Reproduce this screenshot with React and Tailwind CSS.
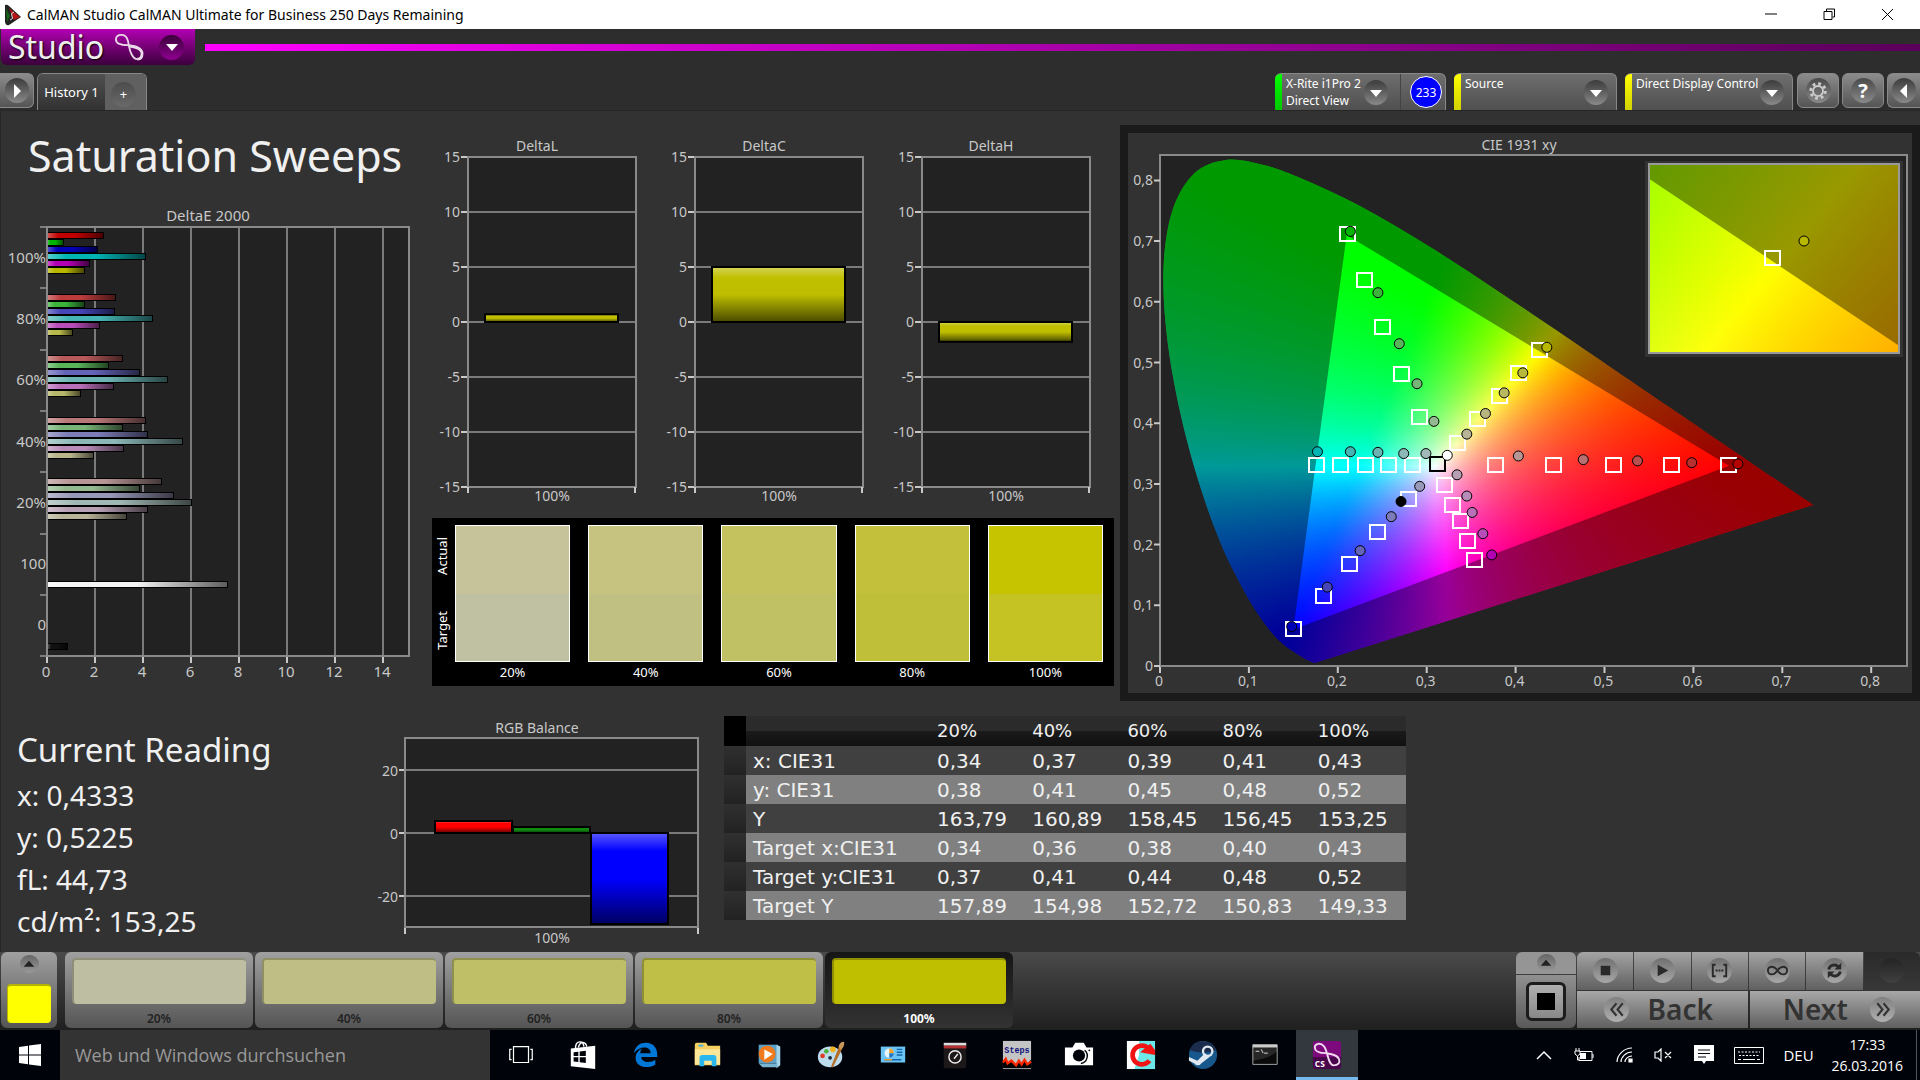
import React, { useState } from "react";

const SWEEP_COLORS = {
  "100%": ["#c00000", "#00b400", "#0000b8", "#00b4b4", "#b400b4", "#b8b800"],
  "80%": ["#bc3c3c", "#3cb43c", "#4646b8", "#46b4b4", "#b84cb8", "#b8b84c"],
  "60%": ["#b85a5a", "#5ab45a", "#6464b8", "#6cb4b4", "#b870b8", "#b8b86c"],
  "40%": ["#b87878", "#78b478", "#7c7cb8", "#8cb8b8", "#b88cb8", "#b8b48c"],
  "20%": ["#b89696", "#94b890", "#9898b8", "#a0b8b4", "#b8a0b4", "#b8b498"],
};

const DELTA_E = [
  { label: "100%", values: [2.35, 0.7, 2.1, 4.1, 1.75, 1.55] },
  { label: "80%", values: [2.85, 1.55, 2.8, 4.4, 2.2, 1.05] },
  { label: "60%", values: [3.15, 2.55, 3.85, 5.0, 2.75, 1.4] },
  { label: "40%", values: [4.1, 3.15, 4.2, 5.65, 3.2, 1.95] },
  { label: "20%", values: [4.75, 3.85, 5.25, 6.0, 4.2, 3.3] },
];

const LEVELS = [
  { label: "20%", actual: "#c6c39b", target: "#c0c1a2", button: "#bebea2" },
  { label: "40%", actual: "#c5c37f", target: "#c0c083", button: "#bfbf85" },
  { label: "60%", actual: "#c4c25f", target: "#c0c065", button: "#bfbf68" },
  { label: "80%", actual: "#c3c13c", target: "#bfbf3a", button: "#bfbf48" },
  { label: "100%", actual: "#c6c400", target: "#c5c324", button: "#bfbf00" },
];

const TABLE_ROWS = [
  ["x: CIE31", "0,34", "0,37", "0,39", "0,41", "0,43"],
  ["y: CIE31", "0,38", "0,41", "0,45", "0,48", "0,52"],
  ["Y", "163,79", "160,89", "158,45", "156,45", "153,25"],
  ["Target x:CIE31", "0,34", "0,36", "0,38", "0,40", "0,43"],
  ["Target y:CIE31", "0,37", "0,41", "0,44", "0,48", "0,52"],
  ["Target Y", "157,89", "154,98", "152,72", "150,83", "149,33"],
];

// Spectral locus, CIE 1931 xy
const LOCUS = [
  [0.1741, 0.005], [0.1644, 0.0109], [0.1566, 0.0177], [0.144, 0.0297], [0.1355, 0.0399],
  [0.1241, 0.0578], [0.1096, 0.0868], [0.0913, 0.1327], [0.0687, 0.2007], [0.0454, 0.295],
  [0.0235, 0.4127], [0.0082, 0.5384], [0.0039, 0.6548], [0.0139, 0.7502], [0.0389, 0.812],
  [0.0743, 0.8338], [0.1142, 0.8262], [0.1547, 0.8059], [0.2296, 0.7543], [0.3016, 0.6923],
  [0.3731, 0.6245], [0.4441, 0.5547], [0.5125, 0.4866], [0.5752, 0.4242], [0.627, 0.3725],
  [0.6915, 0.3083], [0.7347, 0.2653],
];

const GAMUT = [[0.64, 0.33], [0.21, 0.71], [0.15, 0.06]];

const TARGETS = [
  [0.21, 0.712], [0.229, 0.636], [0.25, 0.559], [0.271, 0.481], [0.291, 0.41],
  [0.426, 0.52], [0.403, 0.483], [0.381, 0.444], [0.357, 0.407], [0.334, 0.368],
  [0.175, 0.331], [0.203, 0.331], [0.231, 0.331], [0.256, 0.331], [0.284, 0.331],
  [0.377, 0.331], [0.442, 0.331], [0.509, 0.331], [0.575, 0.331], [0.639, 0.331],
  [0.15, 0.061], [0.183, 0.116], [0.213, 0.168], [0.244, 0.22], [0.279, 0.275],
  [0.353, 0.174], [0.345, 0.206], [0.337, 0.239], [0.329, 0.266], [0.32, 0.298],
];

const READINGS = [
  [0.213, 0.716, "#00b400"], [0.244, 0.615, "#3cb43c"], [0.268, 0.531, "#5ab45a"], [0.288, 0.465, "#78b478"], [0.307, 0.403, "#94b890"],
  [0.434, 0.525, "#b8b800"], [0.407, 0.483, "#b8b83c"], [0.386, 0.45, "#b8b860"], [0.365, 0.416, "#b8b480"], [0.344, 0.382, "#b8b498"],
  [0.322, 0.347, "#ffffff"],
  [0.176, 0.353, "#00b4b4"], [0.213, 0.353, "#46b4b4"], [0.244, 0.352, "#6cb4b4"], [0.273, 0.35, "#8cb8b8"], [0.298, 0.35, "#a0b8b8"],
  [0.402, 0.346, "#b89696"], [0.475, 0.34, "#b87070"], [0.536, 0.338, "#b85050"], [0.597, 0.335, "#b83030"], [0.649, 0.333, "#b40000"],
  [0.333, 0.315, "#b8a0b4"], [0.344, 0.28, "#b88cb8"], [0.35, 0.253, "#b870b8"], [0.362, 0.218, "#b84cb8"], [0.372, 0.183, "#b400b4"],
  [0.291, 0.296, "#9898b8"], [0.27, 0.271, "#000000"], [0.259, 0.246, "#7c7cb8"], [0.224, 0.19, "#6464b8"], [0.187, 0.13, "#4646b8"], [0.147, 0.065, "#0000b8"],
];

function xyToColor(x, y) {
  const Y = Math.max(y, 0.001);
  const X = x / Y;
  const Z = (1 - x - Y) / Y;
  const rgb = [
    3.2406 * X - 1.5372 - 0.4986 * Z,
    -0.9689 * X + 1.8758 + 0.0415 * Z,
    0.0557 * X - 0.204 + 1.057 * Z,
  ].map((c) => Math.max(c, 0));
  const max = Math.max(...rgb);
  return `rgb(${rgb.map((c) => Math.round((255 * c) / max)).join(",")})`;
}

// Thin horizontal strips, each with its own gradient of chromaticity colors
function ColorField({ id, left, top, width, height, toXy, step }) {
  const rows = [];
  for (let y = top; y < top + height; y += 2) rows.push(y);
  const cols = [];
  for (let x = 0; x <= width; x += step) cols.push(x);
  return (
    <g shapeRendering="crispEdges">
      {rows.map((y, i) => (
        <g key={y}>
          <linearGradient id={`${id}-${i}`} gradientUnits="userSpaceOnUse" x1={left} x2={left + width} y1="0" y2="0">
            {cols.map((c) => {
              const [cx, cy] = toXy(left + c, y + 1);
              return <stop key={c} offset={c / width} stopColor={xyToColor(cx, cy)} />;
            })}
          </linearGradient>
          <rect x={left} y={y} width={width} height="2" fill={`url(#${id}-${i})`} />
        </g>
      ))}
    </g>
  );
}

function Sheen({ id, vertical }) {
  return (
    <linearGradient id={id} x1="0" y1="0" x2={vertical ? 0 : 1} y2={vertical ? 1 : 0}>
      <stop offset="0" stopColor="#fff" stopOpacity="0.35" />
      <stop offset="0.2" stopColor="#fff" stopOpacity="0" />
      <stop offset="0.5" stopColor="#000" stopOpacity="0" />
      <stop offset="1" stopColor="#000" stopOpacity="0.62" />
    </linearGradient>
  );
}

function Bar({ x, y, width, height, color, sheen, outline = 2 }) {
  return (
    <>
      <rect x={x} y={y} width={width} height={height} fill={color} />
      <rect x={x} y={y} width={width} height={height} fill={`url(#${sheen})`} stroke="#000" strokeWidth={outline} />
    </>
  );
}

const chartText = "block w-full h-auto font-['Noto_Sans',sans-serif] text-[14px]";

function DeltaEChart() {
  const px = (v) => 47 + v * 24;
  return (
    <svg viewBox="1 0 425 490" className="block w-full h-auto font-['Noto_Sans',sans-serif] text-[15px]" fill="#c8c8c8">
      <Sheen id="sheen-e" />
      <text x="208" y="21" textAnchor="middle">DeltaE 2000</text>
      <rect x="47" y="27" width="362" height="429" fill="#222" />
      {[2, 4, 6, 8, 10, 12, 14].map((v) => (
        <path key={v} d={`M${px(v)} 27V456`} stroke="#7a7a7a" strokeWidth="2" />
      ))}
      {[0, 2, 4, 6, 8, 10, 12, 14].map((v) => (
        <g key={v}>
          <path d={`M${px(v)} 457v6`} stroke="#c8c8c8" strokeWidth="2" />
          <text x={px(v) - 1} y="477" textAnchor="middle">{v}</text>
        </g>
      ))}
      {[0, 1, 2, 3, 4, 5, 6, 7].map((i) => (
        <path key={i} d={`M40 ${27 + Math.round(i * 61.3)}h6`} stroke="#c8c8c8" />
      ))}
      {["100%", "80%", "60%", "40%", "20%", "100", "0"].map((t, i) => (
        <text key={i} x="46" y={63 + Math.round(i * 61.2)} textAnchor="end">{t}</text>
      ))}
      <g shapeRendering="crispEdges">
        {DELTA_E.map((group, g) =>
          group.values.map((v, i) => (
            <Bar
              key={`${g}-${i}`}
              x={47}
              y={32 + Math.round(g * 61.5) + i * 7}
              width={v * 24}
              height={6}
              color={SWEEP_COLORS[group.label][i]}
              sheen="sheen-e"
              outline={1}
            />
          ))
        )}
        <Bar x={47} y={381} width={180} height={6} color="#f4f4f4" sheen="sheen-e" outline={1} />
        <Bar x={47} y={443} width={20} height={6} color="#111" sheen="sheen-e" outline={1} />
      </g>
      <rect x="47" y="27" width="362" height="429" fill="none" stroke="#8a8a8a" strokeWidth="2" />
    </svg>
  );
}

function DeltaChart({ title, value }) {
  const py = (v) => 192 - v * 11;
  const id = `sheen-${title}`;
  return (
    <svg viewBox="0 0 227 380" className={chartText} fill="#c8c8c8">
      <Sheen id={id} vertical />
      <text x="111" y="21" textAnchor="middle">{title}</text>
      <rect x="42" y="27" width="168" height="330" fill="#222" />
      {[15, 10, 5, 0, -5, -10, -15].map((v) => (
        <g key={v}>
          <path d={`M42 ${py(v)}h168`} stroke="#7a7a7a" strokeWidth="2" />
          <path d={`M35 ${py(v)}h6`} stroke="#c8c8c8" strokeWidth="2" />
          <text x="34" y={py(v) + 5} textAnchor="end">{v}</text>
        </g>
      ))}
      <Bar x={59} y={py(Math.max(value, 0))} width={133} height={Math.abs(value) * 11} color="#bfbf00" sheen={id} />
      <rect x="42" y="27" width="168" height="330" fill="none" stroke="#8a8a8a" strokeWidth="2" />
      <path d="M42 357v6M209 357v6" stroke="#c8c8c8" strokeWidth="2" />
      <text x="126" y="371" textAnchor="middle">100%</text>
    </svg>
  );
}

function RgbBalance() {
  return (
    <svg viewBox="360 715 360 237" className={chartText} fill="#c8c8c8">
      <Sheen id="sheen-rgb" vertical />
      <text x="537" y="733" textAnchor="middle">RGB Balance</text>
      <rect x="405" y="738" width="293" height="189" fill="#222" />
      {[[20, 770], [0, 833], [-20, 896]].map(([v, y]) => (
        <g key={v}>
          <path d={`M405 ${y}h293`} stroke="#7a7a7a" strokeWidth="2" />
          <path d={`M399 ${y}h6`} stroke="#c8c8c8" strokeWidth="2" />
          <text x="398" y={y + 6} textAnchor="end">{v}</text>
        </g>
      ))}
      <rect x="405" y="738" width="293" height="189" fill="none" stroke="#8a8a8a" strokeWidth="2" />
      <Bar x={435} y={821} width={77} height={12} color="#ff0000" sheen="sheen-rgb" />
      <Bar x={513} y={827} width={77} height={6} color="#108a10" sheen="sheen-rgb" />
      <Bar x={591} y={833} width={77} height={91} color="#0000ff" sheen="sheen-rgb" />
      <path d="M405 928v6M698 928v6" stroke="#c8c8c8" strokeWidth="2" />
      <text x="552" y="943" textAnchor="middle">100%</text>
    </svg>
  );
}

function CieChart() {
  const px = (x) => 40 + x * 889;
  const py = (y) => 541 - y * 607;
  const pts = LOCUS.map(([x, y]) => [px(x), py(y)]);
  let locus = `M${pts[0]}`;
  for (let i = 0; i < pts.length - 1; i++) {
    const a = pts[i - 1] || pts[i];
    const b = pts[i];
    const c = pts[i + 1];
    const d = pts[i + 2] || c;
    locus += `C${b[0] + (c[0] - a[0]) / 6} ${b[1] + (c[1] - a[1]) / 6} ${c[0] - (d[0] - b[0]) / 6} ${c[1] - (d[1] - b[1]) / 6} ${c[0]} ${c[1]}`;
  }
  locus += "Z";
  const toPath = (fx, fy) => "M" + GAMUT.map(([x, y]) => `${fx(x)} ${fy(y)}`).join("L") + "Z";
  const ix = (x) => 652 + (x - 0.426) * 4300;
  const iy = (y) => 133 - (y - 0.52) * 3250;
  const ticks = [0, 1, 2, 3, 4, 5, 6, 7, 8];
  return (
    <svg viewBox="8 8 784 560" className={chartText} fill="#c8c8c8">
      <clipPath id="locus"><path d={locus} /></clipPath>
      <clipPath id="inset"><rect x="529" y="39" width="250" height="189" /></clipPath>
      <text x="399" y="25" textAnchor="middle">CIE 1931 xy</text>
      <rect x="40" y="30" width="747" height="511" fill="#222" />
      <g clipPath="url(#locus)">
        <ColorField id="cie" left={40} top={30} width={660} height={510} step={11} toXy={(x, y) => [(x - 40) / 889, (541 - y) / 607]} />
        <path d={"M0 0H800V580H0Z" + toPath(px, py)} fillRule="evenodd" fill="#000" fillOpacity="0.4" />
      </g>
      <rect x="40" y="30" width="747" height="511" fill="none" stroke="#8a8a8a" strokeWidth="2" />
      {ticks.map((t) => (
        <g key={t}>
          <path d={`M${px(t / 10)} 542v6M34 ${py(t / 10)}h6`} stroke="#c8c8c8" strokeWidth="2" />
          <text x={px(t / 10) - 1} y="561" textAnchor="middle">{t ? `0,${t}` : "0"}</text>
          <text x="33" y={py(t / 10) + 5} textAnchor="end">{t ? `0,${t}` : "0"}</text>
        </g>
      ))}
      {TARGETS.map(([x, y], i) => (
        <rect key={i} x={Math.round(px(x)) - 7} y={Math.round(py(y)) - 7} width="15" height="14" fill="none" stroke="#fff" strokeWidth="2" />
      ))}
      <rect x="310" y="332" width="15" height="14" fill="none" stroke="#000" strokeWidth="2" />
      {READINGS.map(([x, y, c], i) => (
        <circle key={i} cx={px(x) + 1} cy={py(y)} r="5" fill={c} stroke="#000" strokeWidth="1" />
      ))}
      <rect x="525" y="36" width="258" height="196" fill="#333" />
      <g clipPath="url(#inset)">
        <ColorField id="zoom" left={529} top={38} width={250} height={192} step={10} toXy={(x, y) => [0.426 + (x - 652) / 4300, 0.52 + (133 - y) / 3250]} />
        <path d={"M-3000-3000H6000V6000H-3000Z" + toPath(ix, iy)} fillRule="evenodd" fill="#000" fillOpacity="0.4" />
      </g>
      <rect x="529" y="39" width="250" height="189" fill="none" stroke="#999" strokeWidth="2" />
      <rect x="645" y="126" width="15" height="14" fill="none" stroke="#fff" strokeWidth="2" />
      <circle cx="684" cy="116" r="5" fill="#b8b800" stroke="#000" />
    </svg>
  );
}

function Swatches() {
  return (
    <div className="mt-2 ml-1.5 mr-1.5 flex bg-black text-[13px] leading-4 text-white h-[168px] pt-[7px] pr-[11px]">
      <div className="flex w-[23px] flex-col items-center justify-between pt-3 pr-1 pb-9">
        <span className="rotate-180 [writing-mode:vertical-rl]">Actual</span>
        <span className="rotate-180 [writing-mode:vertical-rl]">Target</span>
      </div>
      <div className="grid flex-1 grid-cols-5 gap-[18px]">
        {LEVELS.map((l) => (
          <div key={l.label} className="text-center">
            <div className="flex h-[137px] flex-col border border-white">
              <div className="flex-1" style={{ background: l.actual }} />
              <div className="flex-1" style={{ background: l.target }} />
            </div>
            <div className="mt-0.5">{l.label}</div>
          </div>
        ))}
      </div>
    </div>
  );
}

function ReadingsTable() {
  return (
    <table className="w-[682px] table-fixed border-collapse text-left font-['DejaVu_Sans',sans-serif] text-[20px] text-[#f0f0f0]">
      <colgroup>
        <col className="w-[22px]" />
        <col className="w-[184px]" />
      </colgroup>
      <thead>
        <tr className="h-[30px] bg-[linear-gradient(#2b2b2b_0_50%,#1a1a1a_50%,#111)] text-[18px]">
          <th className="bg-black" />
          <th />
          {LEVELS.map((l) => (
            <th key={l.label} className="p-0 pl-[7px] font-normal leading-7">{l.label}</th>
          ))}
        </tr>
      </thead>
      <tbody>
        {TABLE_ROWS.map((row, i) => (
          <tr key={row[0]} className={`h-[29px] ${i % 2 ? "bg-[#808080]" : "bg-[#404040]"}`}>
            <td className="bg-linear-to-b from-[#303030] to-[#222] p-0" />
            {row.map((cell, j) => (
              <td key={j} className="whitespace-nowrap p-0 pl-[7px] leading-7">{cell}</td>
            ))}
          </tr>
        ))}
      </tbody>
    </table>
  );
}

function RoundArrow({ dir = "down" }) {
  const d = { down: "M6 10h12l-6 7z", right: "M9 5v14l7-7z", left: "M15 5v14l-7-7z", up: "M5 15h14l-7-7z" }[dir];
  return (
    <span className="flex h-[25px] w-[24px] shrink-0 items-center justify-center rounded-full bg-linear-to-b from-[#3c3c3c] to-[#8a8a8a]">
      <svg viewBox="0 0 24 24" className="h-6 w-6" fill="#fff"><path d={d} /></svg>
    </span>
  );
}

const deviceTab =
  "flex h-[37px] overflow-hidden rounded-t-md border-t border-r border-[#888] bg-linear-to-b from-[#6e6e6e] to-[#505050] text-left text-[12px] leading-[17px] text-white";
const squareBtn =
  "flex h-[35px] w-[42px] items-center justify-center rounded-md border border-[#8a8a8a] bg-linear-to-b from-[#8c8c8c] to-[#555]";

function Header() {
  return (
    <header className="bg-[#2d2d2d]">
      <div className="flex items-start gap-[10px]">
        <button className="ml-px flex h-9 w-[194px] items-center rounded-b-md bg-linear-to-b from-[#b400b4] to-[#3c003c] pl-[7px] text-white">
          <span className="text-[32px] leading-8 text-[#eee] [text-shadow:1px_1px_2px_#000]">Studio</span>
          <svg viewBox="0 0 32 30" className="ml-[9px] h-[28px] w-[32px] shrink-0" fill="none" stroke="#e8d8e8" strokeWidth="2">
            <path d="M15 13C9 13 2 12 2 7 2 3 5 2 8 2c6 0 7 6 8 12s4 14 9 14c4 0 5-3 5-6 0-7-8-8-15-9z" />
            <path d="M17 14c7 1 13 3 13 8 0 4-2 6-5 6" strokeWidth="3" />
          </svg>
          <span className="ml-[14px] flex h-[25px] w-[25px] shrink-0 items-center justify-center rounded-full bg-linear-to-b from-[#3a003a] to-[#900090]">
            <svg viewBox="0 0 24 24" className="h-6 w-6" fill="#fff"><path d="M6 9h12l-6 7z" /></svg>
          </span>
        </button>
        <div className="mt-[15px] h-[7px] flex-1 bg-linear-to-r from-[#ff00ff] to-[#5a005a]" />
      </div>
      <div className="mt-2 flex h-[37px] items-start">
        <button aria-label="Expand" className="flex h-[35px] w-[34px] items-center justify-center rounded-r-md border border-l-0 border-[#8a8a8a] bg-linear-to-b from-[#8c8c8c] to-[#555]">
          <RoundArrow dir="right" />
        </button>
        <div className="ml-[3px] flex h-[37px] overflow-hidden rounded-t-md border border-b-0 border-[#888] text-[13px] text-white">
          <button className="w-[67px] whitespace-nowrap bg-linear-to-b from-[#505050] to-[#323232] pt-0.5 text-center">History 1</button>
          <button aria-label="Add tab" className="flex w-[41px] items-center justify-center bg-[#606060] pt-1 pr-1">
            <span className="flex h-[25px] w-[25px] items-center justify-center rounded-full bg-linear-to-b from-[#4c4c4c] to-[#6a6a6a] leading-5">+</span>
          </button>
        </div>
        <div className="ml-auto flex items-start">
          <div className={`${deviceTab} w-[171px]`}>
            <span className="w-[7px] shrink-0 bg-linear-to-b from-[#00ff00] to-[#00c800]" />
            <button className="flex flex-1 items-center justify-between border-r border-[#444] pl-1 pr-3 text-left">
              <span className="whitespace-nowrap">X-Rite i1Pro 2<br />Direct View</span>
              <RoundArrow />
            </button>
            <span className="mr-[3px] ml-[9px] flex h-8 w-8 items-center justify-center self-center rounded-full border border-white bg-[#0000ff]">233</span>
          </div>
          <button className={`${deviceTab} ml-2 w-[163px]`}>
            <span className="h-full w-[7px] shrink-0 bg-linear-to-b from-[#ffff00] to-[#d2d200]" />
            <span className="flex-1 pl-1 pt-px">Source</span>
            <span className="mr-2 self-center"><RoundArrow /></span>
          </button>
          <button className={`${deviceTab} ml-2 w-[168px]`}>
            <span className="h-full w-[7px] shrink-0 bg-linear-to-b from-[#ffff00] to-[#d2d200]" />
            <span className="flex-1 whitespace-nowrap pl-1 pt-px">Direct Display Control</span>
            <span className="mr-2 self-center"><RoundArrow /></span>
          </button>
          <button aria-label="Settings" className={`${squareBtn} ml-1`}>
            <span className="flex h-[25px] w-[25px] items-center justify-center rounded-full bg-linear-to-b from-[#4a4a4a] to-[#8a8a8a]">
              <svg viewBox="0 0 24 24" className="h-[22px] w-[22px]" fill="none" stroke="#ccc">
                <circle cx="12" cy="12" r="5.500" strokeWidth="2" />
                <circle cx="12" cy="12" r="8" strokeWidth="3" strokeDasharray="3.140 3.140" />
              </svg>
            </span>
          </button>
          <button aria-label="Help" className={`${squareBtn} ml-[3px]`}>
            <span className="flex h-[25px] w-[25px] items-center justify-center rounded-full bg-linear-to-b from-[#4a4a4a] to-[#8a8a8a] text-[20px] font-bold leading-6 text-white">?</span>
          </button>
          <button aria-label="Collapse" className="ml-[3px] flex h-[35px] w-[33px] items-center justify-center rounded-l-md border border-r-0 border-[#8a8a8a] bg-linear-to-b from-[#8c8c8c] to-[#555]">
            <RoundArrow dir="left" />
          </button>
        </div>
      </div>
    </header>
  );
}

function TitleBar() {
  return (
    <div className="flex h-[29px] items-center bg-white text-black">
      <svg viewBox="0 0 18 22" className="ml-1 h-[22px] w-[18px]">
        <path d="M1 1Q3 0 5 2L17 13 5 21Q2 22 1 18Z" fill="#222" />
        <path d="M5 4l11 9-6 3z" fill="#b41414" />
        <path d="M2 4l4 8-3 6z" fill="#146414" />
        <path d="M10 8q-4 1-2 4t-2 4" stroke="#ddd" fill="none" />
      </svg>
      <span className="ml-[5px] text-[14px] leading-5">CalMAN Studio CalMAN Ultimate for Business 250 Days Remaining</span>
      <div className="ml-auto flex">
        {[["Minimize", "M0 6h12"], ["Restore", "M1 3.500h8v8H1zM3.500 3V1h8v8H9.500"], ["Close", "M1 1l11 11M12 1L1 12"]].map(([name, d]) => (
          <button key={name} aria-label={name} className="flex h-[29px] w-[58px] items-center justify-center pr-2">
            <svg viewBox="0 0 13 13" className="h-[13px] w-[13px]" fill="none" stroke="#000"><path d={d} /></svg>
          </button>
        ))}
      </div>
    </div>
  );
}

const transport = [
  ["Stop", <path d="M7 7h10v10H7z" fill="#2a2a2a" />],
  ["Play", <path d="M7 6l11 6-11 6z" fill="#2a2a2a" />],
  ["Range", <g stroke="#2a2a2a" fill="none"><path d="M8 6H5v12h3M16 6h3v12h-3" strokeWidth="2" /><path d="M8 12h8" strokeWidth="2" strokeDasharray="2 1" /></g>],
  ["Loop", <path d="M12 12c-2-3-4-4-6-4a4 4 0 0 0 0 8c2 0 4-1 6-4s4-4 6-4a4 4 0 0 1 0 8c-2 0-4-1-6-4z" fill="none" stroke="#2a2a2a" strokeWidth="2" />],
  ["Refresh", <g fill="none" stroke="#2a2a2a" strokeWidth="3"><path d="M6 11c1-5 7-6 10-3M18 13c-1 5-7 6-10 3" /><path d="M19 4v7h-7zM5 20v-7h7z" fill="#2a2a2a" stroke="none" /></g>],
];

function BottomBar() {
  const [active, setActive] = useState("100%");
  return (
    <footer className="flex h-[78px] items-start bg-linear-to-b from-[#4a4a4a] to-[#202020]">
      <button aria-label="Current patch" className="ml-px flex h-[76px] w-[56px] flex-col items-center rounded-md bg-linear-to-b from-[#a0a0a0] to-[#555] pt-[3px]">
        <span className="flex h-[18px] w-[19px] items-center justify-center rounded-full bg-linear-to-b from-[#666] to-[#999]">
          <svg viewBox="0 0 24 24" className="h-4 w-4" fill="#222"><path d="M4 16h16l-8-9z" /></svg>
        </span>
        <span className="mt-[11px] h-[39px] w-[44px] rounded border-t-2 border-l border-[#b4b400] bg-[#ffff00]" />
      </button>
      <div className="ml-2 flex gap-[2px]">
        {LEVELS.map((l) => (
          <button
            key={l.label}
            onClick={() => setActive(l.label)}
            className={`flex h-[76px] w-[188px] flex-col items-center rounded-md px-[7px] pt-1.5 text-[12px] leading-4 ${
              active === l.label ? "bg-linear-to-b from-[#161616] to-[#333] font-bold text-white" : "bg-linear-to-b from-[#a0a0a0] to-[#555] text-[#222] font-semibold"
            }`}
          >
            <span className="h-[46px] w-full rounded border-t-2 border-l-2 border-black/25" style={{ backgroundColor: l.button }} />
            <span className="mt-[7px]">{l.label}</span>
          </button>
        ))}
      </div>
      <div className="ml-auto flex h-[76px] w-[60px] flex-col gap-px">
        <button aria-label="Raise panel" className="flex h-[22px] items-center justify-center rounded-t-md bg-[#959595]">
          <span className="flex h-[18px] w-[19px] items-center justify-center rounded-full bg-linear-to-b from-[#666] to-[#999]">
            <svg viewBox="0 0 24 24" className="h-4 w-4" fill="#222"><path d="M4 16h16l-8-9z" /></svg>
          </span>
        </button>
        <button aria-label="Pattern" className="flex flex-1 items-center justify-center rounded-b-md bg-linear-to-b from-[#909090] to-[#5a5a5a]">
          <span className="flex h-[39px] w-[40px] items-center justify-center rounded-md border-[3px] border-[#1c1c1c] bg-linear-to-b from-[#b0b0b0] to-[#888]">
            <span className="h-[17px] w-[18px] bg-black" />
          </span>
        </button>
      </div>
      <div className="ml-px flex h-[76px] w-[343px] flex-col gap-px">
        <div className="grid flex-1 grid-cols-6 gap-px">
          {transport.map(([name, icon]) => (
            <button key={name} aria-label={name} className="flex items-center justify-center bg-linear-to-b from-[#a4a4a4] to-[#606060] first:rounded-tl-md">
              <svg viewBox="0 0 24 24" className="h-[25px] w-[25px] rounded-full bg-linear-to-b from-[#707070] to-[#a8a8a8] p-px">{icon}</svg>
            </button>
          ))}
          <button aria-label="Record" disabled className="flex items-center justify-center rounded-tr-md bg-linear-to-b from-[#2a2a2a] to-[#383838]">
            <span className="h-[25px] w-[25px] rounded-full bg-linear-to-b from-[#242424] to-[#404040]" />
          </button>
        </div>
        <div className="grid flex-1 grid-cols-2 gap-0.5 text-[28px] font-semibold leading-8 text-[#333]">
          <button className="flex items-center justify-center gap-[19px] bg-linear-to-b from-[#a8a8a8] to-[#606060] pr-2">
            <svg viewBox="0 0 24 24" className="h-[25px] w-[25px] rounded-full bg-linear-to-b from-[#808080] to-[#b0b0b0]" fill="none" stroke="#333" strokeWidth="2"><path d="M12 6l-5 6 5 6M18 6l-5 6 5 6" /></svg>
            Back
          </button>
          <button className="flex items-center justify-center gap-[22px] bg-linear-to-b from-[#a8a8a8] to-[#606060] pl-2">
            Next
            <svg viewBox="0 0 24 24" className="h-[25px] w-[25px] rounded-full bg-linear-to-b from-[#808080] to-[#b0b0b0]" fill="none" stroke="#333" strokeWidth="2"><path d="M7 6l5 6-5 6M13 6l5 6-5 6" /></svg>
          </button>
        </div>
      </div>
    </footer>
  );
}

const apps = [
  ["Task view", <g fill="none" stroke="#fff" strokeWidth="1.300"><path d="M8 7h16v17H8z" /><path d="M6 10H4v11h2M26 10h2v11h-2" /></g>],
  ["Store", <g><path d="M3 9l26-3v25L3 28z" fill="#fff" /><path d="M8 9c0-9 8-9 9-2M11 8c2-8 8-6 9-1" fill="none" stroke="#fff" strokeWidth="1.500" /><path d="M6 13l5-.6v4.600H6zM12.500 12.200l6.500-.7V17h-6.500zM6 18.500h5v5l-5-.5zM12.500 18.500H19v6l-6.500-.8z" fill="#00040a" /></g>],
  ["Edge", <path d="M4 14C6 6 11 3 17 3c8 0 12 6 12 12v3H12c0 6 10 7 15 3v5c-7 5-21 4-21-7 0-5 3-8 7-10-2 2-2 4-2 5h11c0-8-12-8-18 0z" fill="#0078d7" />],
  ["Explorer", <g><path d="M3 5q0-2 2-2h10l2 3h13v21H3z" fill="#f5cf62" /><path d="M3 10h27v16H3z" fill="#ffe79a" /><path d="M7 5h5v2H7z" fill="#3cb4e8" /><path d="M8 28v-9q0-3 3-3h12q3 0 3 3v9h-5v-6h-8v6z" fill="#2cb6ee" /></g>],
  ["Media player", <g><path d="M5 5h20v20H5z" fill="#5aa0c8" /><path d="M24 5l4 2v20l-4 3z" fill="#a8d4ea" /><path d="M5 25l4 4h17l-2-4z" fill="#78b4d0" /><circle cx="14" cy="15" r="9" fill="#f07a1e" /><path d="M11 10v11l9-6z" fill="#fff" /></g>],
  ["Paint", <g><ellipse cx="15" cy="18" rx="13" ry="11" fill="#bcdcee" /><circle cx="15" cy="19" r="2" fill="#1a2a3a" /><circle cx="7" cy="17" r="2.500" fill="#e03c28" /><circle cx="11" cy="12" r="2.500" fill="#4cb43c" /><circle cx="18" cy="10" r="3" fill="#f0b41e" /><path d="M17 29l9-23 2 1z" stroke="#b46e28" strokeWidth="2" /><path d="M24 7q2-6 6-5 1 5-4 8z" fill="#c8965a" /></g>],
  ["Display", <g><path d="M3 7h26v17H3z" fill="#6cc4f4" /><circle cx="12" cy="14" r="5" fill="#e8f4fc" /><path d="M12 14V9a5 5 0 0 1 5 5z" fill="#f0a028" /><path d="M12 14h5a5 5 0 0 1-5 5z" fill="#1e78c8" /><path d="M20 10h6M20 13h6M20 16h6M7 21h18" stroke="#1464aa" strokeWidth="1.500" /><path d="M7 21h8" stroke="#f0a028" strokeWidth="1.500" /></g>],
  ["Meter", <g><rect x="4" y="3" width="24" height="27" rx="2" fill="#1c1718" /><path d="M4 3h24v3H4z" fill="#ddd" /><path d="M4 6h24v3H4z" fill="#b43030" /><circle cx="16" cy="18" r="6.500" fill="none" stroke="#eee" strokeWidth="1.500" /><path d="M15 20l4-5" stroke="#eee" strokeWidth="1.500" /></g>],
  ["Steps", <g><path d="M1 1h30v30H1z" fill="#c4c4c4" /><path d="M1 23l3-2 3 3 4-2 4 4 3-3 3 2 3-3 3 3 4-4v9H1z" fill="#000" /><path d="M1 24l3-4 2 5 4-3 5 5 3-5 3 4 3-5 3 5 4-3" fill="none" stroke="#ff2800" strokeWidth="2.500" /><text x="16" y="14" textAnchor="middle" fontSize="9" fontWeight="bold" fill="#10107c" fontFamily="Liberation Mono">Steps</text></g>],
  ["Camera", <g><path d="M1 8h8l3-5h9l3 5h7v19H1z" fill="#fff" /><circle cx="16" cy="16.500" r="6.500" fill="#00040a" /><path d="M22 11a8 8 0 0 1-4 14" fill="none" stroke="#00040a" strokeWidth="1.500" /><circle cx="27" cy="11" r="1" fill="#00040a" /></g>],
  ["Sync", <g><path d="M1 1h30v30H1z" fill="#6ce8e8" /><path d="M1 1h13v15l-5 15H1z" fill="#fff" /><path d="M23 8a10 10 0 1 0 2 14" fill="none" stroke="#f01414" strokeWidth="5" /><path d="M15 13l16 3V11l-5-7z" fill="#f01414" /></g>],
  ["Steam", <g><circle cx="16" cy="16" r="15" fill="#17588c" /><path d="M2 11A15 15 0 0 1 30 11Q16 16 2 11z" fill="#1c2c4c" /><circle cx="21" cy="12" r="5" fill="none" stroke="#e0e8f0" strokeWidth="2.500" /><path d="M1 18l9 4 8-8 5 4-9 7a4 4 0 0 1-7 0l-6-3z" fill="#e0e8f0" /></g>],
  ["Console", <g><path d="M3 5h26v21H3z" fill="#0a0a0a" stroke="#aaa" /><path d="M3 5h26v3H3z" fill="#ccc" /><path d="M6 12h4M12 10l2 4M15 14h4" stroke="#ddd" /><path d="M3 26V22Q20 20 29 12V8H3z" fill="#fff" fillOpacity="0.120" /></g>],
  ["CalMAN Studio", <g><rect x="1" y="1" width="30" height="30" rx="3" fill="#7c0a7c" /><path d="M1 18h30v10q0 3-3 3H4q-3 0-3-3z" fill="#000" fillOpacity="0.400" /><path d="M15 14C8 14 3 12 3 8s6-6 10-1 4 20 10 20c5 0 7-3 6-6-1-5-8-6-14-7z" fill="none" stroke="#f0d8f0" strokeWidth="2" /><text x="3" y="29" fontSize="9" fontWeight="bold" fill="#fff">CS</text></g>],
];

function Taskbar() {
  return (
    <div className="flex h-[50px] bg-[#00040a] font-['Open_Sans',sans-serif] text-white">
      <button aria-label="Start" className="flex w-[60px] items-center justify-center">
        <svg viewBox="0 0 22 22" className="h-[22px] w-[22px]" fill="#fff"><path d="M0 3l9-1.300V10.500H0zM10 1.600L22 0v10.500H10zM0 11.500h9v8.800L0 19zM10 11.500h12V22l-12-1.600z" /></svg>
      </button>
      <input aria-label="Suche" placeholder="Web und Windows durchsuchen" className="w-[430px] bg-[#333] pl-[15px] text-[18px] placeholder-[#999] outline-none" />
      <div className="flex">
        {apps.map(([name, icon]) => (
          <button
            key={name}
            aria-label={name}
            className={`flex w-[62px] items-center justify-center ${name === "CalMAN Studio" ? "border-b-[3px] border-[#76b9ed] bg-[#33383e] pt-[3px]" : ""}`}
          >
            <svg viewBox="0 0 32 32" className="h-[30px] w-[30px]">{icon}</svg>
          </button>
        ))}
      </div>
      <div className="ml-auto flex items-center text-[15px]">
        <svg viewBox="0 0 16 10" className="h-[10px] w-[16px]" fill="none" stroke="#fff" strokeWidth="1.500"><path d="M1 9l7-7 7 7" /></svg>
        <svg viewBox="0 0 20 14" className="ml-[22px] h-[14px] w-[20px]" fill="none" stroke="#fff"><path d="M6 3.500h12v9H5V9M19 6v4" /><path d="M6 5h6v6H6z" fill="#fff" stroke="none" /><path d="M1 3h5v3L3.500 8 1 6zM2 0v3M5 0v3M3.500 8v4h2" /></svg>
        <svg viewBox="0 0 18 16" className="ml-[22px] h-[16px] w-[18px]" fill="none" stroke="#fff" strokeWidth="1.200"><path d="M1 15C1 8 8 1 16 1M5 15C5 10 10 5 16 5M9 15c0-3 3-6 7-6" /><path d="M13 12h3v3h-3z" fill="#fff" /></svg>
        <svg viewBox="0 0 19 14" className="ml-[20px] h-[14px] w-[19px]" fill="none" stroke="#fff" strokeWidth="1.200"><path d="M1 4h3l3-3v12l-3-3H1zM11 4l6 6M17 4l-6 6" /></svg>
        <svg viewBox="0 0 20 20" className="ml-[21px] h-[20px] w-[20px]"><path d="M0 0h20v16h-8l-2 3-2-3H0z" fill="#fff" /><path d="M4 5h12M4 8.500h12M4 12h8" stroke="#00040a" strokeWidth="1.200" /></svg>
        <svg viewBox="0 0 30 17" className="ml-[20px] h-[17px] w-[30px]" fill="none" stroke="#fff"><path d="M.5.5h29v16H.5z" /><path d="M4 5h22M5 8.500h20" strokeDasharray="2 1.500" /><path d="M4 12.500h3M9 12.500h12M23 12.500h3" /></svg>
        <span className="ml-[19px]">DEU</span>
        <div className="ml-[18px] mr-[13px] text-center text-[14px] leading-[21px]">
          <div>17:33</div>
          <div>26.03.2016</div>
        </div>
        <div className="mr-[3px] h-[50px] w-px bg-[#555]" />
      </div>
    </div>
  );
}

function App() {
  return (
    <div className="flex min-h-screen flex-col bg-[#323232] font-['Noto_Sans','Open_Sans',sans-serif]">
      <TitleBar />
      <Header />
      <main className="flex-1 border-t border-l border-[#262626]">
        <div className="grid grid-cols-[425fr_694fr_800fr]">
          <section>
            <h1 className="h-[89px] pl-[27px] pt-[18px] text-[43px] leading-[54px] text-[#f0f0f0]">Saturation Sweeps</h1>
            <DeltaEChart />
          </section>
          <section className="pt-[19px]">
            <div className="mr-[13px] grid grid-cols-3">
              <DeltaChart title="DeltaL" value={0.7} />
              <DeltaChart title="DeltaC" value={5} />
              <DeltaChart title="DeltaH" value={-1.8} />
            </div>
            <Swatches />
          </section>
          <section className="pt-[14px]">
            <div className="bg-[#1a1a1a] p-2">
              <div className="bg-[#323232]">
                <CieChart />
              </div>
            </div>
          </section>
        </div>
        <div className="mt-[14px] grid grid-cols-[359fr_360fr_1200fr]">
          <section className="pl-4 pt-[13px] text-[#f0f0f0]">
            <h2 className="text-[33px] leading-[44px]">Current Reading</h2>
            <div className="pt-0.5 text-[28px] leading-[42px]">
              <p>x: 0,4333</p>
              <p>y: 0,5225</p>
              <p>fL: 44,73</p>
              <p>cd/m²: 153,25</p>
            </div>
          </section>
          <RgbBalance />
          <section className="pl-1 pt-px">
            <ReadingsTable />
          </section>
        </div>
      </main>
      <BottomBar />
      <Taskbar />
    </div>
  );
}

export default App;
